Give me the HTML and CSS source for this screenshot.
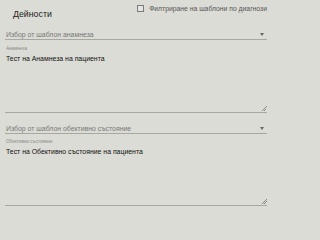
FILE: index.html
```html
<!DOCTYPE html>
<html lang="bg">
<head>
<meta charset="utf-8">
<link rel="stylesheet" href="styles.css">
</head>
<body>
<div class="panel">
  <div class="header">
    <div class="title">Дейности</div>
    <label class="filter"><span class="box"></span><span>Филтриране на шаблони по диагнози</span></label>
  </div>
  <div class="select">
    <span class="placeholder">Избор от шаблон анамнеза</span>
    <span class="arrow"></span>
  </div>
  <div class="area">
    <div class="label">Анамнеза</div>
    <div class="value">Тест на Анамнеза на пациента</div>
    <span class="grip"></span>
  </div>
  <div class="select second">
    <span class="placeholder">Избор от шаблон обективно състояние</span>
    <span class="arrow"></span>
  </div>
  <div class="area last">
    <div class="label">Обективно състояние</div>
    <div class="value">Тест на Обективно състояние на пациента</div>
    <span class="grip"></span>
  </div>
</div>
</body>
</html>
```
FILE: styles.css
```css
html, body { margin: 0; padding: 0; }
body {
  background: #dcdcd6;
  font-family: "Liberation Sans", Arial, sans-serif;
  width: 272px;
  height: 209px;
  overflow: hidden;
}
.panel {
  display: flex;
  flex-direction: column;
  padding: 0 5px;
}
.header {
  display: flex;
  justify-content: space-between;
  align-items: flex-start;
  height: 28px;
}
.title {
  font-size: 8.8px;
  color: #222;
  padding: 9px 0 0 8px;
}
.filter {
  display: flex;
  align-items: center;
  gap: 5px;
  font-size: 6.8px;
  color: #555;
  padding-top: 5px;
}
.box {
  width: 5px;
  height: 5px;
  border: 1px solid #7a7a7a;
  background: #e4e4e0;
}
.select {
  position: relative;
  height: 11px;
  border-bottom: 1px solid #a8a8a3;
  display: flex;
  align-items: flex-end;
  padding-left: 1px;
}
.select.second {
  margin-top: 9px;
}
.placeholder {
  font-size: 6.9px;
  line-height: 9px;
  padding-bottom: 0;
  color: #777;
}
.arrow {
  position: absolute;
  right: 3px;
  top: 5px;
  width: 0;
  height: 0;
  border-left: 2.5px solid transparent;
  border-right: 2.5px solid transparent;
  border-top: 3px solid #666;
}
.area {
  position: relative;
  height: 73px;
  border-bottom: 1px solid #a8a8a3;
  padding: 6px 0 0 1px;
  box-sizing: border-box;
}
.area.last {
  height: 72px;
  padding-top: 5px;
}
.label {
  font-size: 4.6px;
  line-height: 6px;
  color: #8a8a8a;
}
.value {
  font-size: 6.9px;
  line-height: 9px;
  color: #111;
  margin-top: 2px;
}
.grip {
  position: absolute;
  right: 0;
  bottom: 1px;
  width: 5px;
  height: 5px;
  background: linear-gradient(135deg, transparent 45%, #888 45%, #888 55%, transparent 55%, transparent 70%, #888 70%, #888 80%, transparent 80%);
}
```
